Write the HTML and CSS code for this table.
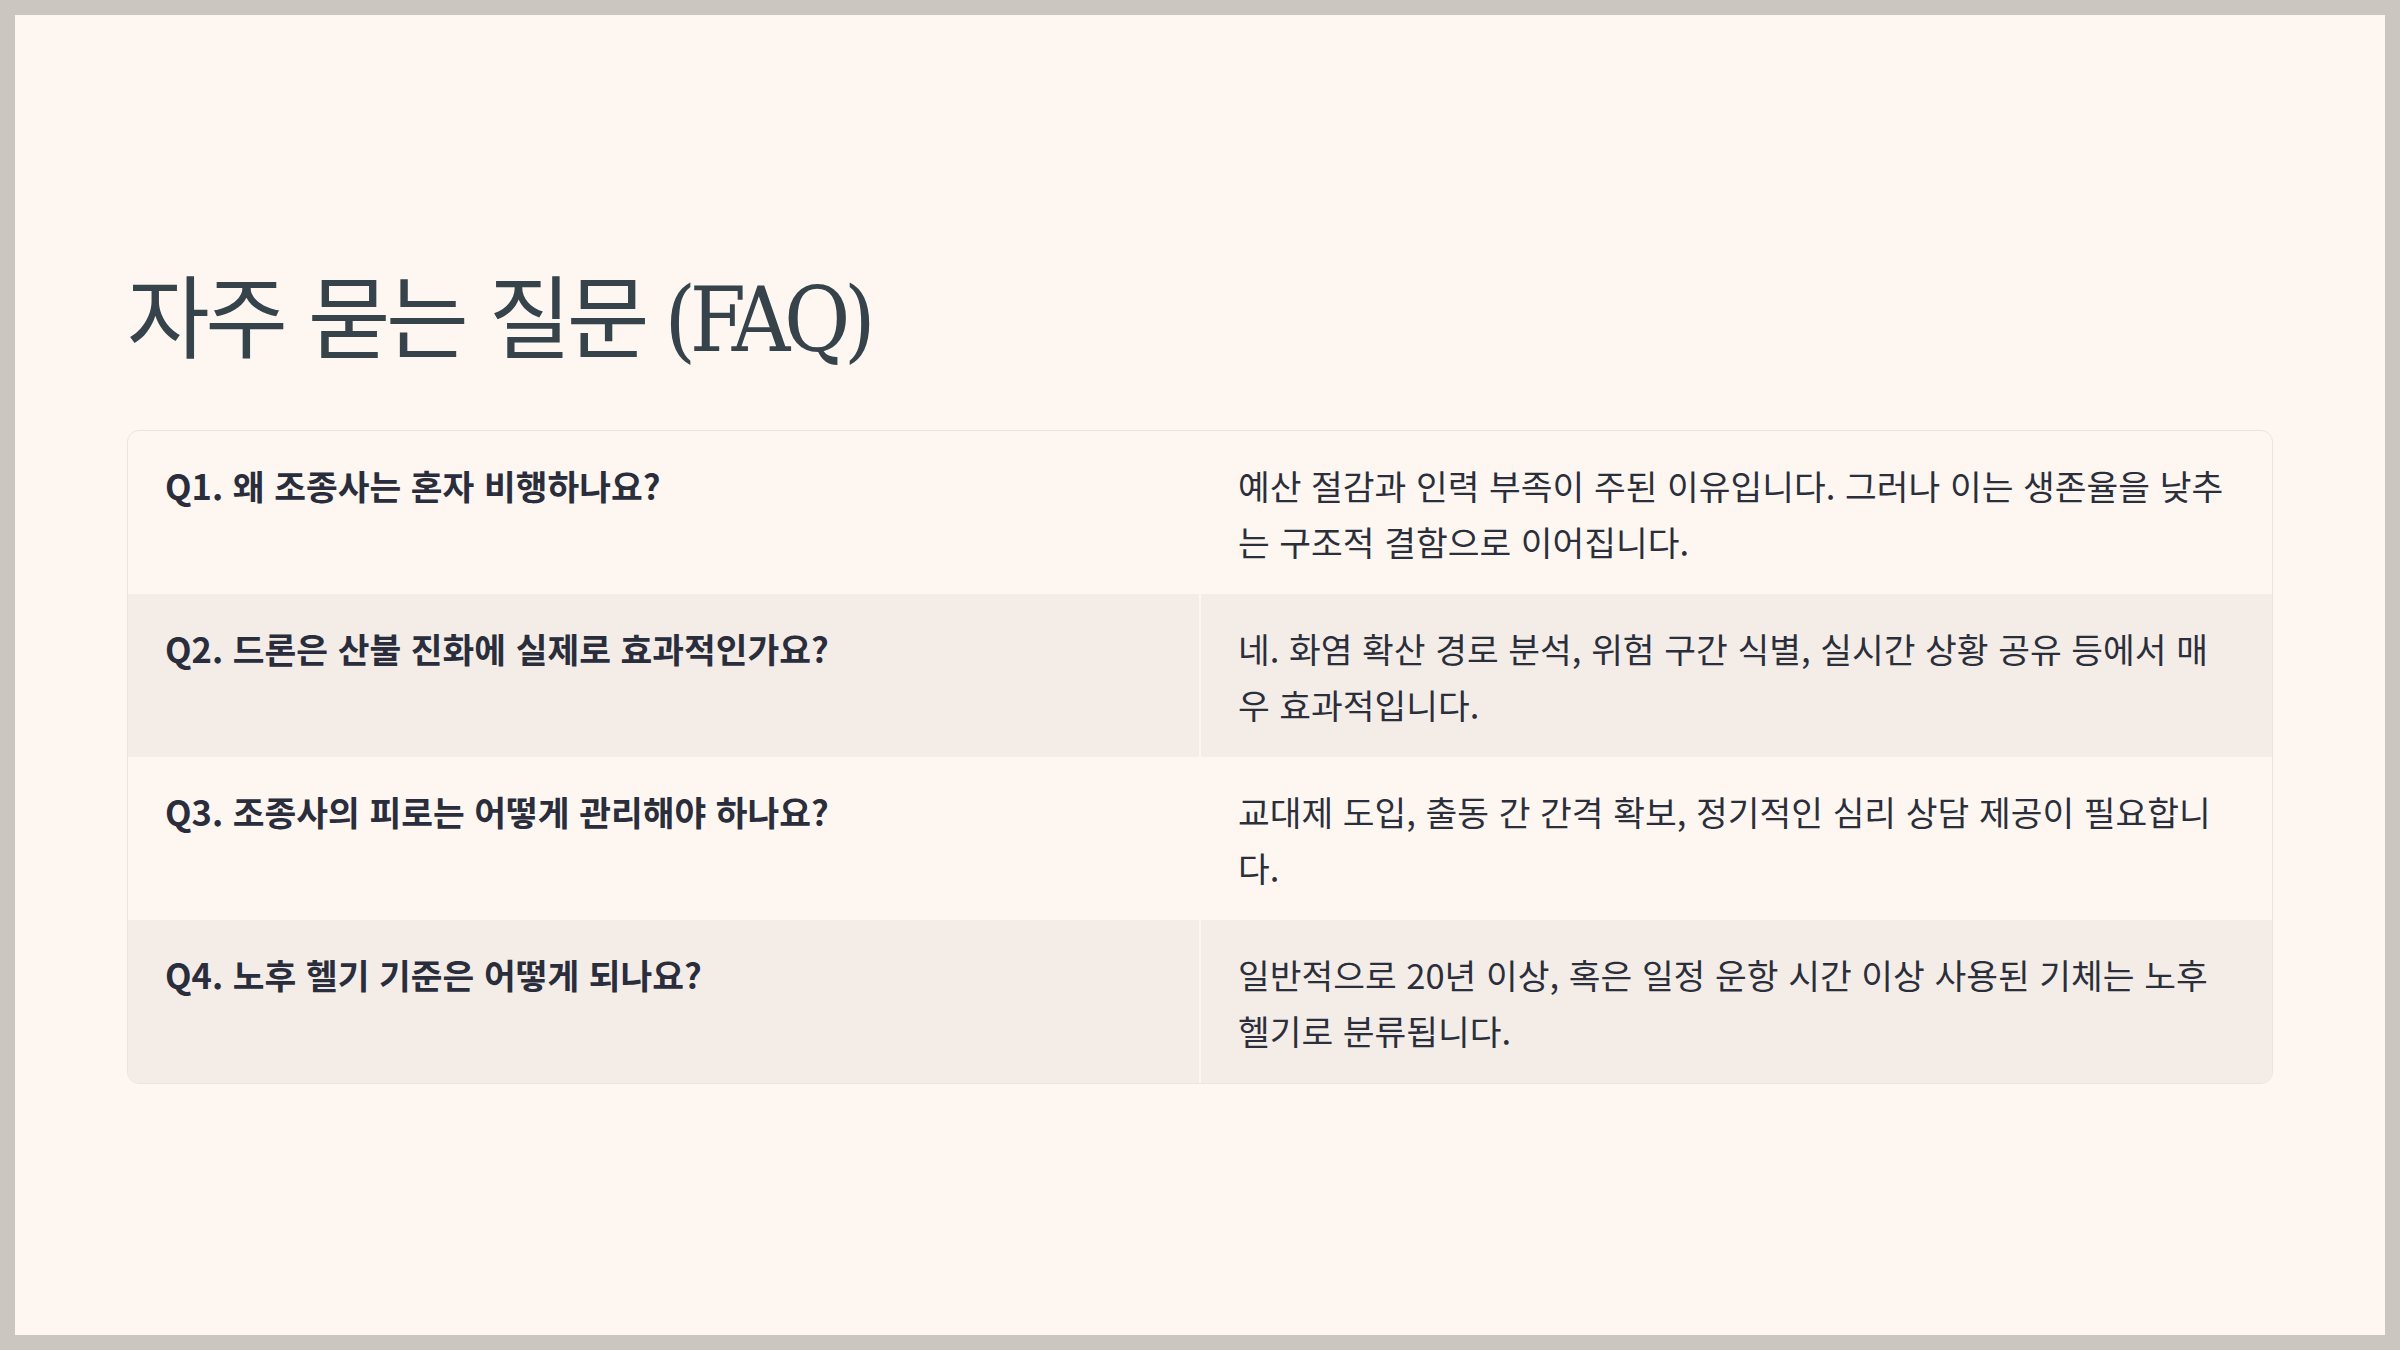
FILE: index.html
```html
<!DOCTYPE html>
<html lang="ko">
<head>
<meta charset="utf-8">
<title>자주 묻는 질문 (FAQ)</title>
<link rel="stylesheet" href="styles.css">
</head>
<body>
<main class="slide">
  <h1 class="title">자주 묻는 질문<span class="abbr"> (FAQ)</span></h1>
  <table class="faq">
    <tbody>
      <tr>
        <td class="q">Q1. 왜 조종사는 혼자 비행하나요?</td>
        <td class="a">예산 절감과 인력 부족이 주된 이유입니다. 그러나 이는 생존율을 낮추는 구조적 결함으로 이어집니다.</td>
      </tr>
      <tr>
        <td class="q">Q2. 드론은 산불 진화에 실제로 효과적인가요?</td>
        <td class="a">네. 화염 확산 경로 분석, 위험 구간 식별, 실시간 상황 공유 등에서 매우 효과적입니다.</td>
      </tr>
      <tr>
        <td class="q">Q3. 조종사의 피로는 어떻게 관리해야 하나요?</td>
        <td class="a">교대제 도입, 출동 간 간격 확보, 정기적인 심리 상담 제공이 필요합니다.</td>
      </tr>
      <tr>
        <td class="q">Q4. 노후 헬기 기준은 어떻게 되나요?</td>
        <td class="a">일반적으로 20년 이상, 혹은 일정 운항 시간 이상 사용된 기체는 노후 헬기로 분류됩니다.</td>
      </tr>
    </tbody>
  </table>
</main>
</body>
</html>
```

FILE: styles.css
```css
html, body {
  margin: 0;
  padding: 0;
}

body {
  background: #cbc6c0;
  padding: 15px;
  width: 2400px;
  height: 1350px;
  box-sizing: border-box;
}

.slide {
  box-sizing: border-box;
  height: 1320px;
  background: #fef7f1;
  padding: 0 112px;
  display: flex;
  flex-direction: column;
  justify-content: center;
}

.title {
  margin: 0 0 56px 0;
  font-family: "DejaVu Serif", "Noto Sans CJK KR", serif;
  font-weight: 400;
  font-size: 90px;
  line-height: 1.2;
  letter-spacing: -0.05em;
  color: #36434b;
}

.title .abbr {
  font-family: "DejaVu Serif Condensed", "DejaVu Serif", serif;
  font-stretch: condensed;
  letter-spacing: -0.07em;
}

.faq {
  width: 100%;
  border-collapse: separate;
  border-spacing: 0;
  border: 1px solid #ebe3dc;
  border-radius: 12px;
  overflow: hidden;
  table-layout: fixed;
  font-family: "Noto Sans CJK KR", "Noto Sans", sans-serif;
  font-size: 34.5px;
  line-height: 56px;
  color: #2b2f3b;
}

.faq td {
  vertical-align: top;
  padding: 25.5px 37px;
  width: 50%;
}

.faq td.q {
  font-weight: 700;
  border-right: 2px solid #fef7f1;
  color: #2a2e3c;
}

.faq tr:nth-child(even) td {
  background: #f4ede7;
}
```
